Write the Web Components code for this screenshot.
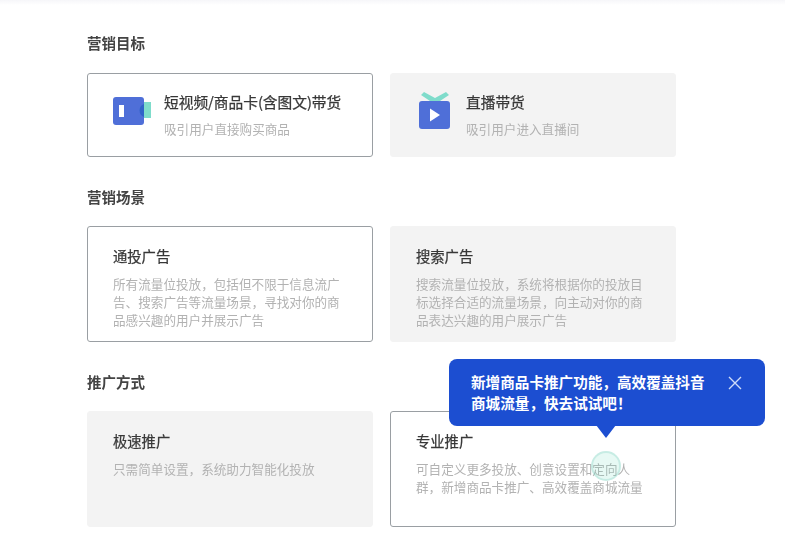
<!DOCTYPE html>
<html lang="zh">
<head>
<meta charset="utf-8">
<title>营销目标</title>
<style>
    html, body { margin: 0; background: #fff; }
    body {
        font-family: "Noto Sans CJK SC", "Liberation Sans", sans-serif;
        background: linear-gradient(#f6f6f9, #fff 5px) no-repeat;
    }
</style>
</head>
<body>
<ad-page>
    <ad-section heading="营销目标" style="--row: 84px; --head-gap: 20px; --title-size: 14.7px">
        <ad-card selected heading="短视频/商品卡(含图文)带货" desc="吸引用户直接购买商品">
            <svg slot="icon" style="margin: -8px -1px 0 0" width="38" height="30" viewBox="0 0 38 30">
                <rect x="30" y="6" width="8" height="16" fill="#7fdccb"/>
                <rect x="0" y="1" width="31" height="28" rx="3" fill="#4f6fd8"/>
                <path d="M31 8a7 7 0 0 0 0 13z" fill="#2f63c8"/>
                <rect x="6" y="9" width="5" height="12" fill="#fff"/>
            </svg>
        </ad-card>
        <ad-card heading="直播带货" desc="吸引用户进入直播间">
            <svg slot="icon" style="margin: -10px 1px 0 3px" width="32" height="37" viewBox="0 0 32 37">
                <path d="M5 0l11 6 11-6 3 3-12 8h-4L2 3z" fill="#7fdccb"/>
                <rect x="0" y="9" width="31" height="28" rx="3" fill="#4f6fd8"/>
                <path d="M11 16.5l10 6.5-10 6.5z" fill="#fff"/>
            </svg>
        </ad-card>
    </ad-section>
    <ad-section heading="营销场景" style="--row: 116px">
        <ad-card selected stacked heading="通投广告" desc="所有流量位投放，包括但不限于信息流广<br>告、搜索广告等流量场景，寻找对你的商<br>品感兴趣的用户并展示广告"></ad-card>
        <ad-card stacked heading="搜索广告" desc="搜索流量位投放，系统将根据你的投放目<br>标选择合适的流量场景，向主动对你的商<br>品表达兴趣的用户展示广告"></ad-card>
    </ad-section>
    <ad-section heading="推广方式" style="--row: 116px">
        <ad-card stacked heading="极速推广" desc="只需简单设置，系统助力智能化投放"></ad-card>
        <ad-card selected stacked heading="专业推广" desc="可自定义更多投放、创意设置和定向人<br>群，新增商品卡推广、高效覆盖商城流量"></ad-card>
    </ad-section>
</ad-page>
<ad-tip>新增商品卡推广功能，高效覆盖抖音<br>商城流量，快去试试吧！</ad-tip>

<script>
class AdPage extends HTMLElement {
    connectedCallback() {
        this.attachShadow({ mode: 'open' });
        this.shadowRoot.innerHTML = `
            <style>
                :host {
                    display: flex;
                    flex-direction: column;
                    gap: 30px;
                    padding: 33px 0 0 87px;
                    filter: blur(0.45px);
                }
            </style>
            <slot></slot>
        `;
    }
}

class AdSection extends HTMLElement {
    connectedCallback() {
        this.attachShadow({ mode: 'open' });
        this.shadowRoot.innerHTML = `
            <style>
                :host { display: block; }
                h3 {
                    margin: 0 0 var(--head-gap, 19px);
                    font-size: 14.5px;
                    line-height: 20px;
                    font-weight: 700;
                    color: #444;
                }
                .grid {
                    display: grid;
                    grid-template-columns: 286px 286px;
                    grid-auto-rows: var(--row);
                    column-gap: 17px;
                }
            </style>
            <h3>${this.getAttribute('heading')}</h3>
            <div class="grid"><slot></slot></div>
        `;
    }
}

class AdCard extends HTMLElement {
    connectedCallback() {
        this.attachShadow({ mode: 'open' });
        this.shadowRoot.innerHTML = `
            <style>
                :host {
                    display: flex;
                    align-items: center;
                    box-sizing: border-box;
                    padding: 0 25px;
                    gap: 14px;
                    background: #f3f3f3;
                    border: 1px solid #f3f3f3;
                    border-radius: 3px;
                }
                :host([selected]) { background: #fff; border-color: #9a9fa3; }
                :host([stacked]) { align-items: flex-start; padding-top: 19px; }
                h4 {
                    margin: 0;
                    font-size: var(--title-size, 14.3px);
                    line-height: 20px;
                    font-weight: 400;
                    color: #383838;
                    -webkit-text-stroke: 0.25px #383838;
                }
                p {
                    margin: 8px 0 0;
                    font-size: 12.6px;
                    line-height: 18px;
                    color: #b2b2b2;
                    white-space: nowrap;
                }
                :host([stacked]) p { margin-top: 9px; }
                ::slotted(svg) { display: block; flex: none; }
            </style>
            <slot name="icon"></slot>
            <div>
                <h4>${this.getAttribute('heading')}</h4>
                <p>${this.getAttribute('desc')}</p>
            </div>
        `;
    }
}

class AdTip extends HTMLElement {
    connectedCallback() {
        this.attachShadow({ mode: 'open' });
        this.shadowRoot.innerHTML = `
            <style>
                :host {
                    position: absolute;
                    left: 449px;
                    top: 359px;
                    width: 316px;
                    height: 67px;
                    box-sizing: border-box;
                    padding: 12px 23px 0 22px;
                    display: flex;
                    justify-content: space-between;
                    background: #1c4ed1;
                    border-radius: 8px;
                    color: #fff;
                    font-size: 14.6px;
                    font-weight: 700;
                    line-height: 21px;
                    white-space: nowrap;
                    filter: blur(0.35px);
                }
                .arrow {
                    position: absolute;
                    left: 147px;
                    top: 66px;
                    width: 0;
                    height: 0;
                    border: 10px solid transparent;
                    border-top: 13px solid #1c4ed1;
                    border-bottom: 0;
                }
                .ripple {
                    position: absolute;
                    left: 142px;
                    top: 92px;
                    width: 30px;
                    height: 30px;
                    box-sizing: border-box;
                    border-radius: 50%;
                    background: rgba(120, 220, 195, 0.18);
                    border: 2px solid rgba(120, 205, 185, 0.28);
                }
                svg { display: block; margin: 5px 0 0; flex: none; }
            </style>
            <div><slot></slot></div>
            <svg width="14" height="14" viewBox="0 0 14 14" fill="none" stroke="#cfdcf8" stroke-width="1.4">
                <path d="M1 1l12 12M13 1L1 13"/>
            </svg>
            <span class="arrow"></span>
            <span class="ripple"></span>
        `;
    }
}

customElements.define('ad-page', AdPage);
customElements.define('ad-section', AdSection);
customElements.define('ad-card', AdCard);
customElements.define('ad-tip', AdTip);
</script>
</body>
</html>
